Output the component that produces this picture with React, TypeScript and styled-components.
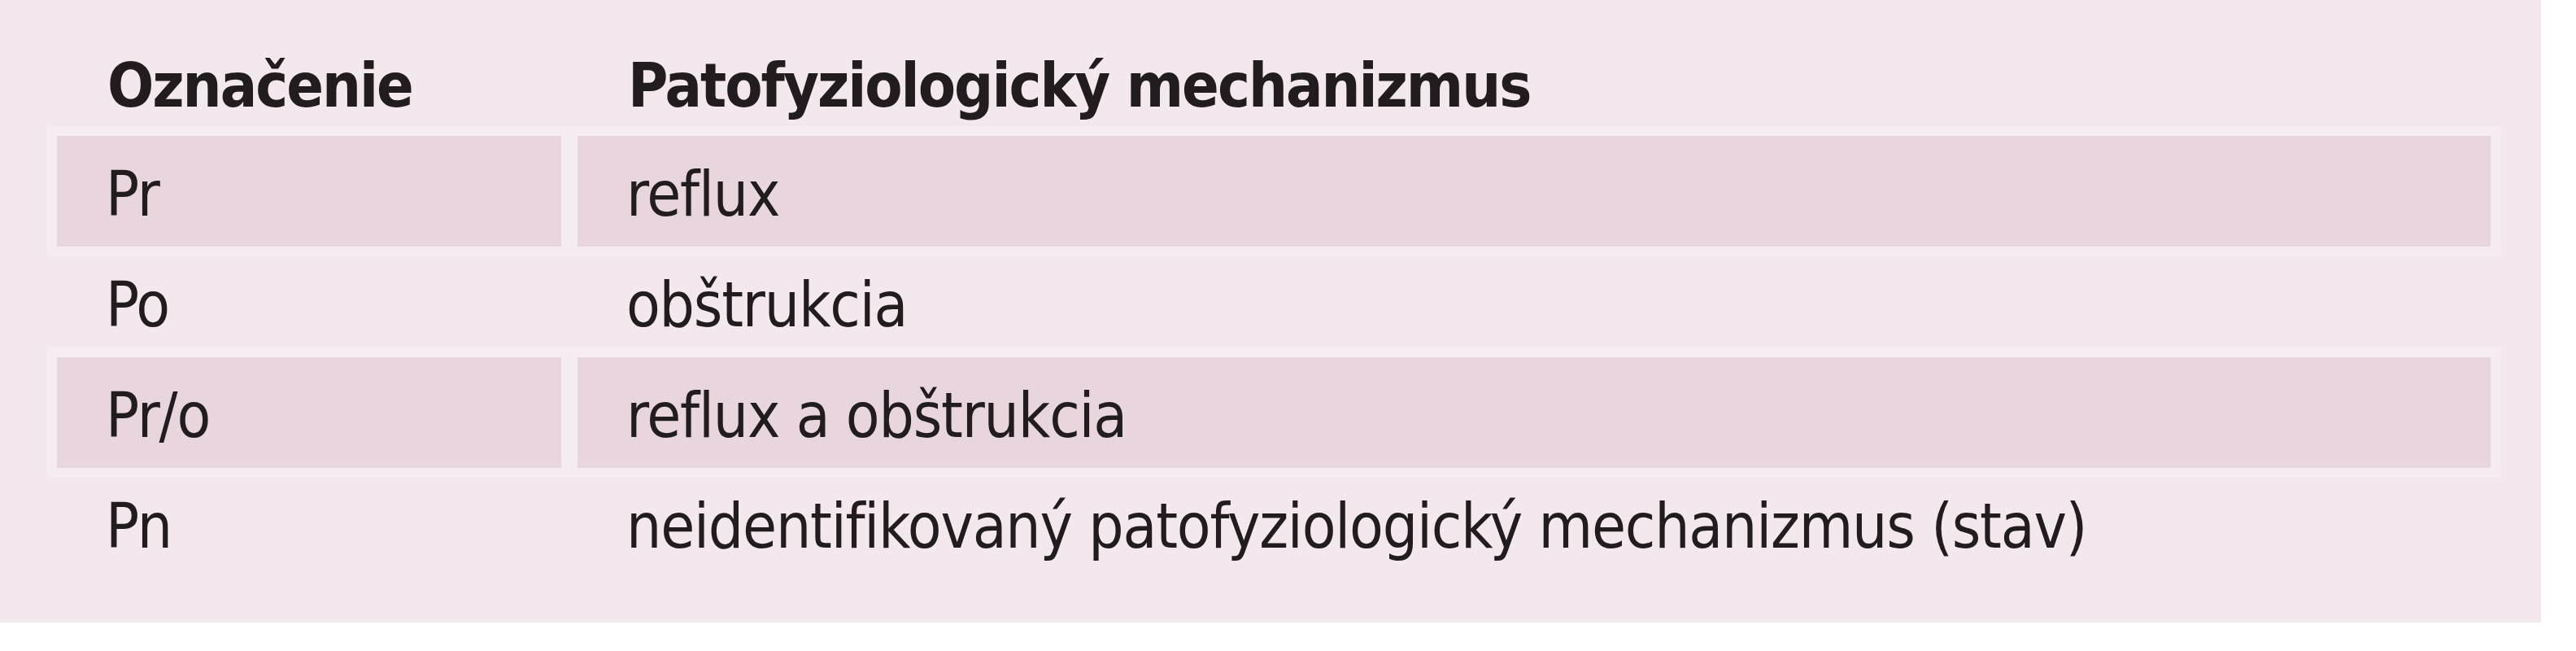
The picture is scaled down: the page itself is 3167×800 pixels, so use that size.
import styled, { createGlobalStyle } from 'styled-components';

const rows = [
  { id: 1, code: 'Pr', text: 'reflux', shaded: true },
  { id: 2, code: 'Po', text: 'obštrukcia', shaded: false },
  { id: 3, code: 'Pr/o', text: 'reflux a obštrukcia', shaded: true },
  { id: 4, code: 'Pn', text: 'neidentifikovaný patofyziologický mechanizmus (stav)', shaded: false }
];

const GlobalStyle = createGlobalStyle`
  html, body {
    margin: 0;
    padding: 0;
    background: #ffffff;
  }
  body {
    font-family: 'Liberation Sans Narrow', 'DejaVu Sans Condensed', 'Liberation Sans', sans-serif;
    color: #211d1f;
  }
`;

export default function App() {
  return (
    <>
      <GlobalStyle />
      <Panel>
        <Table>
          <HeadCell>Označenie</HeadCell>
          <HeadCell>Patofyziologický mechanizmus</HeadCell>
          {rows.map((row) => (
            <Row key={row.id}>
              <Cell $shaded={row.shaded}>{row.code}</Cell>
              <Cell $shaded={row.shaded}>{row.text}</Cell>
            </Row>
          ))}
        </Table>
      </Panel>
    </>
  );
}

const Panel = styled.div`
  width: 3124px;
  height: 765px;
  box-sizing: border-box;
  padding: 31px 62px 0 70px;
  background: #f3e8ee;
`;

const Table = styled.div`
  display: grid;
  grid-template-columns: 620px 1fr;
  grid-auto-rows: 136px;
  column-gap: 20px;
`;

const Row = styled.div`
  display: contents;
`;

const HeadCell = styled.div`
  display: flex;
  align-items: center;
  padding: 12px 0 0 62px;
  font-size: 75px;
  font-weight: 700;
  letter-spacing: -2px;
`;

const Cell = styled.div<{ $shaded: boolean }>`
  display: flex;
  align-items: center;
  padding: 6px 0 0 60px;
  font-size: 76px;
  letter-spacing: -1.2px;
  white-space: nowrap;
  background: ${(p) => (p.$shaded ? '#e8d5dd' : 'transparent')};
  box-shadow: ${(p) => (p.$shaded ? '0 0 0 12px #f6edf2' : 'none')};
`;
